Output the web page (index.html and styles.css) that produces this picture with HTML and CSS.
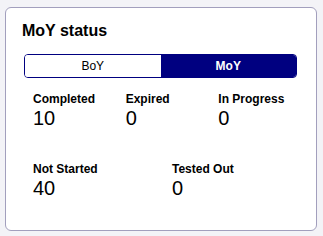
FILE: index.html
```html
<!DOCTYPE html>
<html lang="en">
<head>
    <meta charset="UTF-8">
    <meta name="viewport" content="width=device-width, initial-scale=1.0">
    <title>MoY status</title>
    <link rel="stylesheet" href="styles.css">
</head>
<body>
    <div class="card">
        <div class="card-title">MoY status</div>

        <!-- period switch -->
        <div class="toggle">
            <button type="button" class="toggle-btn">BoY</button>
            <button type="button" class="toggle-btn active">MoY</button>
        </div>

        <div class="stats stats-3">
            <div class="stat">
                <div class="stat-label">Completed</div>
                <div class="stat-value">10</div>
            </div>
            <div class="stat">
                <div class="stat-label">Expired</div>
                <div class="stat-value">0</div>
            </div>
            <div class="stat">
                <div class="stat-label">In Progress</div>
                <div class="stat-value">0</div>
            </div>
        </div>

        <div class="stats stats-2">
            <div class="stat">
                <div class="stat-label">Not Started</div>
                <div class="stat-value">40</div>
            </div>
            <div class="stat">
                <div class="stat-label">Tested Out</div>
                <div class="stat-value">0</div>
            </div>
        </div>
    </div>
</body>
</html>
```

FILE: styles.css
```css
body {
    margin: 0;
    padding: 7px 0 0 5px;
    background-color: #f3f3f7;
    font-family: 'Liberation Sans', Arial, sans-serif;
    color: #000;
}

.card {
    box-sizing: border-box;
    width: 312px;
    height: 224px;
    padding: 14px 16px 0 16px;
    background-color: #fff;
    border: 1px solid #a29fbd;
    border-radius: 6px;
}

.card-title {
    font-size: 16px;
    font-weight: bold;
    line-height: 18px;
}

/* segmented control */
.toggle {
    display: flex;
    width: 273px;
    height: 24px;
    margin: 14px 0 0 2px;
    box-sizing: border-box;
    border: 1px solid #000080;
    border-radius: 4px;
    overflow: hidden;
}

.toggle-btn {
    flex: 1;
    margin: 0;
    padding: 0;
    border: none;
    background-color: #fff;
    color: #000;
    font-family: inherit;
    font-size: 12px;
    cursor: pointer;
}

.toggle-btn.active {
    background-color: #000080;
    color: #fff;
    font-weight: bold;
}

/* numbers */
.stats {
    display: grid;
    width: 278px;
    margin-left: 11px;
}

.stats-3 {
    grid-template-columns: repeat(3, 1fr);
    margin-top: 14px;
}

.stats-2 {
    grid-template-columns: repeat(2, 1fr);
    margin-top: 34px;
}

.stat-label {
    font-size: 12px;
    font-weight: bold;
    line-height: 15px;
}

.stat-value {
    margin-top: 1px;
    font-size: 20px;
    line-height: 20px;
}
```
